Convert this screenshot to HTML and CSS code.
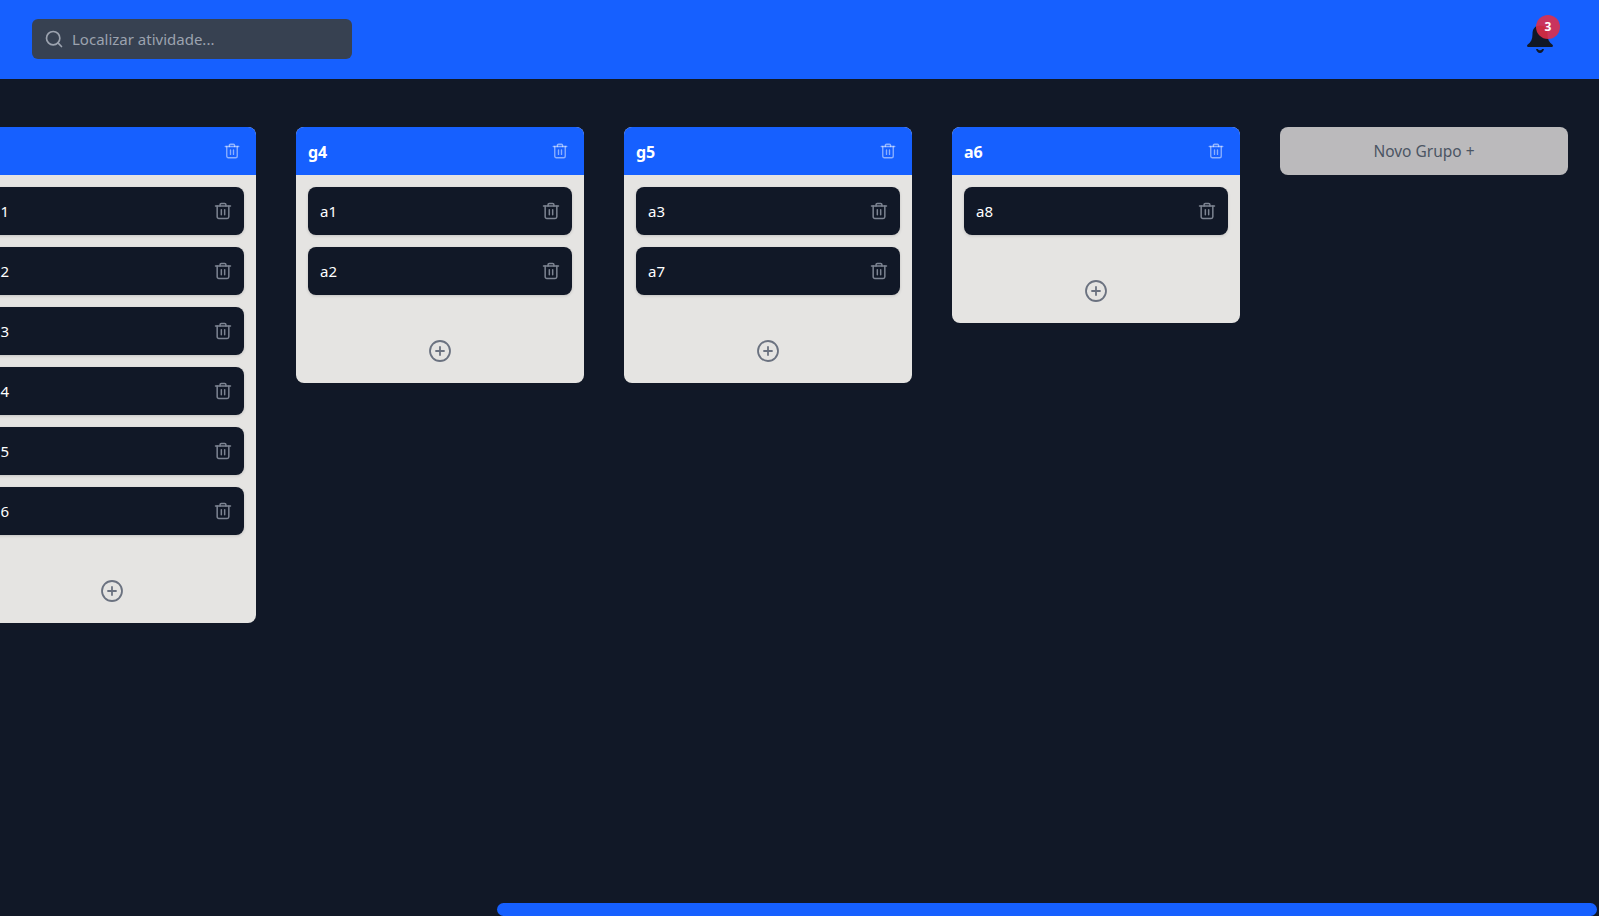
FILE: index.html
```html
<!DOCTYPE html>
<html lang="en">
  <head>
    <meta charset="UTF-8" />
    <meta name="viewport" content="width=device-width, initial-scale=1.0" />
    <title>Quadro de atividades</title>
    <link rel="stylesheet" href="styles.css">
  </head>
  <body>
    <svg class="icon-defs" width="0" height="0">
      <symbol id="icon-trash" viewBox="0 0 24 24">
        <path d="M3 6h18" />
        <path d="M19 6v13c0 1-1 2-2 2H7c-1 0-2-1-2-2V6" />
        <path d="M8.500 6V4.500c0-1 .5-1.500 1.500-1.500h4c1 0 1.500.5 1.500 1.500V6" />
        <path d="M10 10.500v6" />
        <path d="M14 10.500v6" />
      </symbol>
      <symbol id="icon-plus" viewBox="0 0 24 24">
        <circle cx="12" cy="12" r="10" />
        <path d="M8 12h8" />
        <path d="M12 8v8" />
      </symbol>
    </svg>

    <header class="topbar">
      <label class="search">
        <svg class="search-icon" viewBox="0 0 24 24">
          <circle cx="11" cy="11" r="8" />
          <path d="m21 21-4.300-4.300" />
        </svg>
        <input type="text" placeholder="Localizar atividade..." />
      </label>
      <button class="bell">
        <svg class="bell-icon" viewBox="0 0 26 30">
          <path d="M13 .5C8 .5 5.500 4 5.500 9c0 5-1.500 8.500-5 10.800-.8.600-.5 2.200.8 2.200h23.400c1.300 0 1.600-1.600.8-2.200-3.500-2.300-5-5.800-5-10.800C20.500 4 18 .5 13 .5z" />
          <path d="M9 24h1.800c.5.900 1.200 1.300 2.200 1.300s1.700-.4 2.200-1.300H17c-.4 2.300-2 4-4 4s-3.600-1.700-4-4z" />
        </svg>
        <span class="badge">3</span>
      </button>
    </header>

    <main class="board" id="board"></main>
    <div class="scroll-thumb"></div>

    <script>
      const groups = [
        { name: "g3", items: ["a1", "a2", "a3", "a4", "a5", "a6"] },
        { name: "g4", items: ["a1", "a2"] },
        { name: "g5", items: ["a3", "a7"] },
        { name: "a6", items: ["a8"] },
      ];

      const board = document.getElementById("board");

      function icon(name, cls) {
        return `<svg class="${cls}"><use href="#icon-${name}"></use></svg>`;
      }

      groups.forEach((group) => {
        const column = document.createElement("section");
        column.className = "group";
        const items = group.items
          .map(
            (item) => `
              <li class="item">
                <span>${item}</span>
                ${icon("trash", "item-trash")}
              </li>`
          )
          .join("");
        column.innerHTML = `
          <div class="group-head">
            <h2>${group.name}</h2>
            ${icon("trash", "head-trash")}
          </div>
          <ul class="items">${items}</ul>
          <button class="add-item">${icon("plus", "plus-icon")}</button>
        `;
        board.appendChild(column);
      });

      const newGroup = document.createElement("button");
      newGroup.className = "new-group";
      newGroup.textContent = "Novo Grupo +";
      board.appendChild(newGroup);
    </script>
  </body>
</html>
```

FILE: styles.css
```css
* {
  box-sizing: border-box;
}

html,
body {
  height: 100%;
}

body {
  position: relative;
  margin: 0;
  display: flex;
  flex-direction: column;
  overflow: hidden;
  background-color: #111827;
  font-family: "Noto Sans", "Open Sans", sans-serif;
  font-size: 15px;
}

button {
  border: none;
  background: none;
  padding: 0;
  font: inherit;
  cursor: pointer;
}

.icon-defs {
  position: absolute;
}

symbol {
  fill: none;
  stroke-width: 1.8;
  stroke-linecap: round;
  stroke-linejoin: round;
}

.topbar {
  flex: none;
  height: 79px;
  display: flex;
  align-items: center;
  justify-content: space-between;
  padding: 0 32px 1px;
  background-color: #1660ff;
}

.search {
  width: 320px;
  height: 40px;
  display: flex;
  align-items: center;
  gap: 6px;
  padding: 0 12px;
  border-radius: 6px;
  background-color: #374151;
}

.search-icon {
  flex: none;
  width: 20px;
  height: 20px;
  fill: none;
  stroke: #9ca3af;
  stroke-width: 2;
  stroke-linecap: round;
}

.search input {
  flex: 1;
  min-width: 0;
  border: none;
  outline: none;
  background: none;
  color: #fff;
  font: inherit;
}

.search input::placeholder {
  color: #9ca3af;
  opacity: 1;
}

.bell {
  position: relative;
  width: 26px;
  height: 30px;
  margin-right: 14px;
  margin-top: 1px;
}

.bell-icon {
  display: block;
  width: 26px;
  height: 30px;
  fill: #111827;
}

.badge {
  position: absolute;
  top: -10px;
  left: 9px;
  width: 24px;
  height: 24px;
  border-radius: 50%;
  background-color: rgba(226, 46, 72, 0.88);
  color: #fff;
  font-size: 12px;
  font-weight: 700;
  line-height: 24px;
  text-align: center;
}

.board {
  flex: 1;
  display: flex;
  align-items: flex-start;
  gap: 40px;
  margin-left: -32px;
  padding-top: 48px;
  overflow: hidden;
}

.scroll-thumb {
  position: absolute;
  left: 497px;
  right: 2px;
  bottom: 0;
  height: 13px;
  border-radius: 7px;
  background-color: #1660ff;
}

.group {
  flex: none;
  width: 288px;
  border-radius: 8px;
  overflow: hidden;
  background-color: #e5e4e2;
}

.group-head {
  height: 48px;
  display: flex;
  align-items: center;
  justify-content: space-between;
  padding: 0 15px 0 12px;
  background-color: #1660ff;
  color: #fff;
}

.group-head h2 {
  margin: 1px 0 0;
  font-size: 16px;
  font-weight: 700;
}

.head-trash {
  width: 18px;
  height: 18px;
  stroke: rgba(255, 255, 255, 0.5);
}

.items {
  list-style: none;
  margin: 0;
  padding: 12px 12px 0;
  display: flex;
  flex-direction: column;
  gap: 12px;
}

.item {
  height: 48px;
  display: flex;
  align-items: center;
  justify-content: space-between;
  padding: 0 11px 0 12px;
  border-radius: 8px;
  background-color: #111827;
  color: #fff;
  box-shadow: 0 1px 3px rgba(0, 0, 0, 0.15);
}

.item-trash {
  width: 20px;
  height: 20px;
  stroke: #7d8492;
}

.add-item {
  display: block;
  width: 24px;
  height: 24px;
  margin: 44px auto 20px;
}

.plus-icon {
  display: block;
  width: 24px;
  height: 24px;
  stroke: #6b7280;
}

.new-group {
  flex: none;
  width: 288px;
  height: 48px;
  border-radius: 8px;
  background-color: #bbbabc;
  color: #4b5563;
  font-size: 15.5px;
}
```
